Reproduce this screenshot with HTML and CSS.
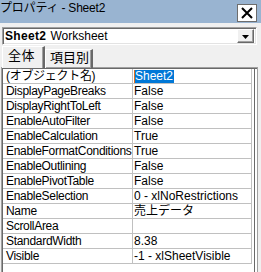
FILE: index.html
```html
<!DOCTYPE html>
<html lang="ja">
<head>
<meta charset="utf-8">
<title>プロパティ - Sheet2</title>
<link rel="stylesheet" href="styles.css">
</head>
<body>
<div class="win">
  <div class="titlebar">
    <span class="title-text">プロパティ - Sheet2</span>
    <div class="close">
      <svg width="12" height="12" viewBox="0 0 12 12"><path d="M1 1 L11 11 M11 1 L1 11" stroke="#000" stroke-width="2" fill="none"/></svg>
    </div>
  </div>
  <div class="combo">
    <span class="obj"><b>Sheet2</b> Worksheet</span>
    <div class="drop"><svg width="7" height="4" viewBox="0 0 7 4"><path d="M0 0 H7 L3.5 4 Z" fill="#000"/></svg></div>
  </div>
  <div class="tabs">
    <div class="tab active">全体</div>
    <div class="tab">項目別</div>
  </div>
  <div class="page">
    <div class="grid">
      <div class="k">(オブジェクト名)</div><div class="v"><span class="sel">Sheet2</span></div>
      <div class="k">DisplayPageBreaks</div><div class="v">False</div>
      <div class="k">DisplayRightToLeft</div><div class="v">False</div>
      <div class="k">EnableAutoFilter</div><div class="v">False</div>
      <div class="k">EnableCalculation</div><div class="v">True</div>
      <div class="k">EnableFormatConditions</div><div class="v">True</div>
      <div class="k">EnableOutlining</div><div class="v">False</div>
      <div class="k">EnablePivotTable</div><div class="v">False</div>
      <div class="k">EnableSelection</div><div class="v">0 - xlNoRestrictions</div>
      <div class="k">Name</div><div class="v">売上データ</div>
      <div class="k">ScrollArea</div><div class="v"></div>
      <div class="k">StandardWidth</div><div class="v">8.38</div>
      <div class="k">Visible</div><div class="v">-1 - xlSheetVisible</div>
    </div>
  </div>
</div>
</body>
</html>
```

FILE: styles.css
```css
html, body {
  margin: 0;
  padding: 0;
}
body {
  background: #f0f0f0;
  width: 261px;
  height: 272px;
  overflow: hidden;
  font-family: "Liberation Sans", "Noto Sans CJK JP", sans-serif;
  font-size: 12px;
  color: #000;
}
.win {
  display: flex;
  flex-direction: column;
}
.titlebar {
  height: 23px;
  background: #99b4d1;
  display: flex;
  justify-content: space-between;
  align-items: flex-start;
}
.title-text {
  padding-top: 1px;
  line-height: 15px;
  letter-spacing: -0.2px;
}
.close {
  box-sizing: border-box;
  width: 20px;
  height: 18px;
  margin: 4px 4px 0 0;
  background: #fff;
  border: 1px solid #6d6d6d;
  display: flex;
  align-items: center;
  justify-content: center;
}
.combo {
  box-sizing: border-box;
  height: 18px;
  margin: 4px 4px 0 2px;
  background: #fff;
  border: 1px solid;
  border-color: #a0a0a0 #fff #fff #a0a0a0;
  box-shadow: inset 1px 1px #696969, inset -1px -1px #e3e3e3;
  display: flex;
  align-items: center;
  padding: 0 2px 0 2px;
}
.obj {
  line-height: 14px;
  word-spacing: 1px;
}
.obj b {
  letter-spacing: 0.3px;
}
.drop {
  box-sizing: border-box;
  margin-left: auto;
  width: 17px;
  height: 14px;
  background: #f0f0f0;
  border: 1px solid;
  border-color: #fff #696969 #696969 #fff;
  box-shadow: inset -1px -1px #a0a0a0;
  display: flex;
  align-items: center;
  justify-content: center;
  padding-top: 2px;
}
.tabs {
  display: flex;
  align-items: flex-end;
  height: 22px;
  margin-top: 1px;
  padding-left: 2px;
  position: relative;
  z-index: 1;
  margin-bottom: -1px;
}
.tab {
  box-sizing: border-box;
  height: 19px;
  width: 48px;
  border-top: 1px solid #fff;
  border-left: 1px solid #fff;
  border-right: 2px solid #696969;
  box-shadow: inset -1px 0 #a0a0a0;
  font-family: "Noto Sans CJK JP", sans-serif;
  font-size: 13px;
  line-height: 14px;
  padding-left: 4px;
  white-space: nowrap;
}
.tab.active {
  height: 22px;
  width: 43px;
  background: #f0f0f0;
  padding-left: 5px;
  line-height: 16px;
  letter-spacing: 0.5px;
}
.page {
  box-sizing: border-box;
  height: 210px;
  margin: 0 3px 0 1px;
  border: 1px solid;
  border-color: #a0a0a0 #a0a0a0 #fff #a0a0a0;
  box-shadow: inset 1px 1px #696969, inset -2px 0 #fff, inset -3px 0 #696969;
  padding: 1px 5px 0 1px;
  background: #fff;
}
.grid {
  display: grid;
  grid-template-columns: 130px 1fr;
  border-right: 1px solid #c0c0c0;
}
.k, .v {
  height: 14px;
  line-height: 14px;
  border-bottom: 1px solid #c0c0c0;
  white-space: nowrap;
  overflow: hidden;
}
.k {
  padding-left: 3px;
  border-right: 1px solid #c0c0c0;
  letter-spacing: -0.3px;
}
.v {
  padding-left: 1px;
}
.sel {
  display: inline-block;
  background: #0078d7;
  color: #fff;
  padding-right: 1px;
  border-left: 1px solid #e07020;
  line-height: 13px;
}
```
